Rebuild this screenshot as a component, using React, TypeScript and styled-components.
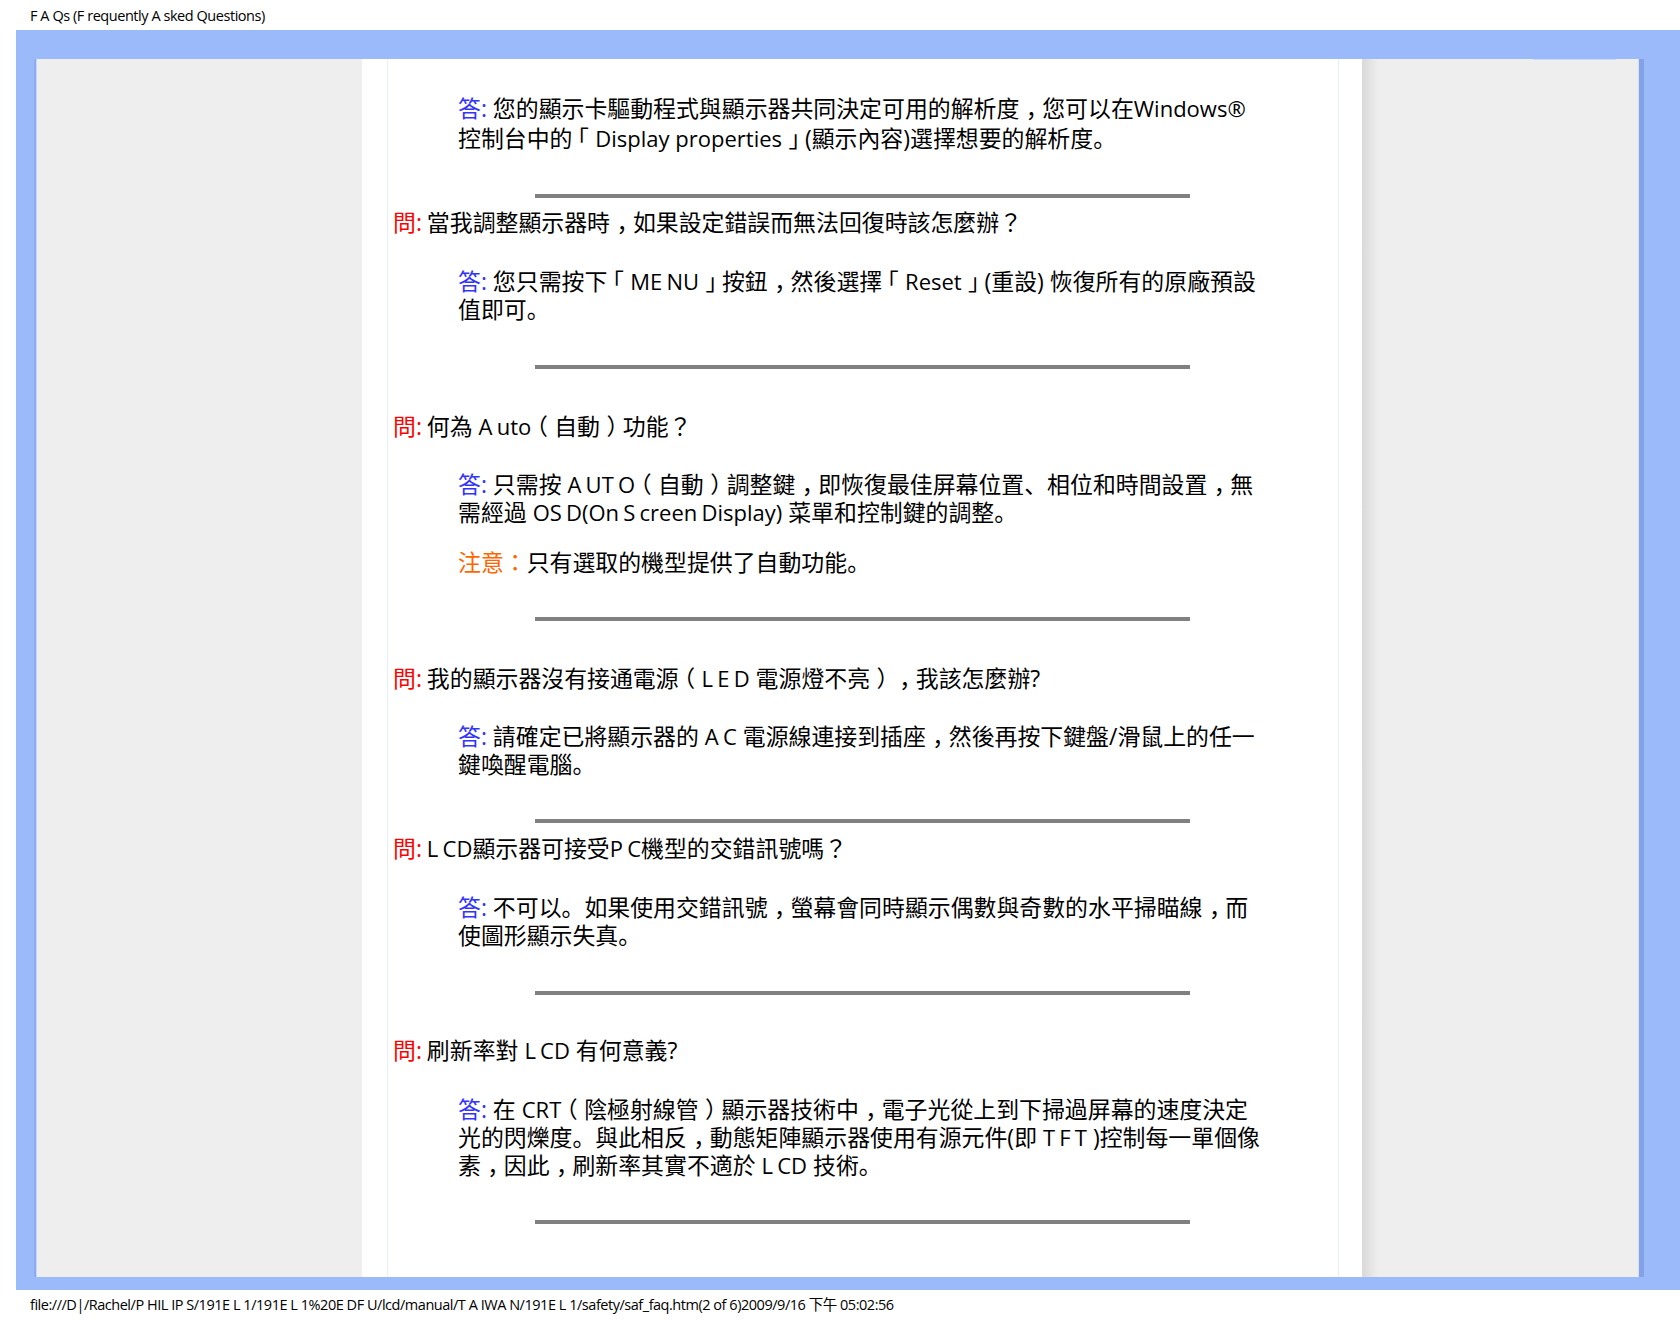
import { createGlobalStyle, styled } from "styled-components";

const GlobalStyle = createGlobalStyle`
  html, body {
    margin: 0;
    padding: 0;
    background: #ffffff;
  }
  body {
    font-family: "Open Sans", "Noto Sans CJK SC", sans-serif;
    color: #000000;
    text-spacing-trim: space-all;
    font-kerning: none;
  }
`;

const Page = styled.div`
  width: 1680px;
  height: 1320px;
  overflow: hidden;
  display: flex;
  flex-direction: column;
`;

const TopLine = styled.div`
  height: 30px;
  padding: 1px 0 0 30px;
  box-sizing: border-box;
  font-size: 14.5px;
  line-height: 30px;
  white-space: pre;
  letter-spacing: -0.45px;
`;

const Frame = styled.div`
  margin-left: 16px;
  height: 1260px;
  background: #9abaf9;
  padding: 29px 36px 13px 18px;
  box-sizing: border-box;
`;

const Inner = styled.div`
  height: 100%;
  display: flex;
  border-left: 2px solid #8fabf0;
  border-right: 5px solid #84a0e6;
`;

const SideLeft = styled.div`
  width: 326px;
  box-sizing: border-box;
  background: #eeeeee;
  border-left: 1px solid #c8d8fa;
`;

const SideRight = styled.div`
  flex: 1;
  background: linear-gradient(to right, #d9d9d9 0, #eeeeee 16px);
  border-right: 1px solid #d6e2f6;
  position: relative;
`;

const TopGlint = styled.div`
  position: absolute;
  top: 0;
  left: 171px;
  width: 83px;
  height: 1px;
  background: #c8d8f6;
`;

const Sheet = styled.div`
  width: 1000px;
  background: #ffffff;
  padding: 0 23px 0 25px;
  box-sizing: border-box;
`;

const Column = styled.div`
  height: 100%;
  border-left: 1px solid #e6eef8;
  border-right: 1px solid #e6eef8;
  padding: 35px 0 0 5px;
  box-sizing: border-box;
  font-size: 22.9px;
  line-height: 28px;
  white-space: pre;
  overflow: hidden;
`;

const Question = styled.div<{ $top: number }>`
  margin-top: ${(p) => p.$top}px;
`;

const Answer = styled.div<{ $top: number; $lh?: number }>`
  margin-top: ${(p) => p.$top}px;
  margin-left: 65px;
  line-height: ${(p) => p.$lh ?? 28}px;
`;

const Rule = styled.div<{ $top: number }>`
  margin-top: ${(p) => p.$top}px;
  margin-left: 142px;
  width: 655px;
  height: 4px;
  background: #808080;
`;

const Latin = styled.span<{ $gap?: number }>`
  font-size: 22px;
  line-height: 1;
  word-spacing: ${(p) => p.$gap ?? -1.5}px;
`;

// full-width punctuation sits mid-cell in the source: halve the glyph and pad it back to one em
const Open = styled.span`
  font-feature-settings: "halt";
  padding: 0 0.28em 0 0.22em;
`;

const Close = styled.span`
  font-feature-settings: "halt";
  padding: 0 0.22em 0 0.28em;
`;

const Ask = styled.span`
  font-family: "Open Sans", "Noto Sans CJK TC", sans-serif;
`;

const Q = styled.span`
  color: #ff0000;
  margin-right: -1px;
`;

const A = styled.span`
  color: #3333ff;
`;

const Note = styled.span`
  color: #ff6600;
  font-family: "Open Sans", "Noto Sans CJK TC", sans-serif;
`;

const BottomLine = styled.div`
  height: 30px;
  padding-left: 30px;
  font-size: 14.5px;
  line-height: 30px;
  white-space: pre;
  letter-spacing: -0.47px;
`;

export default function App() {
  return (
    <Page>
      <GlobalStyle />
      <TopLine>F A Qs (F requently A sked Questions)</TopLine>
      <Frame>
        <Inner>
          <SideLeft />
          <Sheet>
            <Column>
              <Answer $top={0} $lh={30}>
                <A>答:</A> 您的顯示卡驅動程式與顯示器共同決定可用的解析度<Close>，</Close>您可以在<Latin>Windows®</Latin>
                <br />
                控制台中的<Open>「</Open><Latin $gap={0}>Display properties</Latin><Close>」</Close>(顯示內容)選擇想要的解析度。
              </Answer>
              <Rule $top={40} />
              <Question $top={11}>
                <Q>問:</Q> 當我調整顯示器時<Close>，</Close>如果設定錯誤而無法回復時該怎麼辦<Ask>？</Ask>
              </Question>
              <Answer $top={31}>
                <A>答:</A> 您只需按下<Open>「</Open><Latin>ME NU</Latin><Close>」</Close>按鈕<Close>，</Close>然後選擇<Open>「</Open><Latin>Reset</Latin><Close>」</Close>(重設) 恢復所有的原廠預設
                <br />
                值即可。
              </Answer>
              <Rule $top={41} />
              <Question $top={44}>
                <Q>問:</Q> 何為 <Latin>A uto</Latin><Open>（</Open>自動<Close>）</Close>功能<Ask>？</Ask>
              </Question>
              <Answer $top={30}>
                <A>答:</A> 只需按 <Latin>A UT O</Latin><Open>（</Open>自動<Close>）</Close>調整鍵<Close>，</Close>即恢復最佳屏幕位置、相位和時間設置<Close>，</Close>無
                <br />
                需經過 <Latin>OS D(On S creen Display)</Latin> 菜單和控制鍵的調整。
              </Answer>
              <Answer $top={22}>
                <Note>注意：</Note>只有選取的機型提供了自動功能。
              </Answer>
              <Rule $top={40} />
              <Question $top={44}>
                <Q>問:</Q> 我的顯示器沒有接通電源<Open>（</Open><Latin>L E D</Latin> 電源燈不亮<Close>）</Close><Close>，</Close>我該怎麼辦?
              </Question>
              <Answer $top={30}>
                <A>答:</A> 請確定已將顯示器的 <Latin>A C</Latin> 電源線連接到插座<Close>，</Close>然後再按下鍵盤/滑鼠上的任一
                <br />
                鍵喚醒電腦。
              </Answer>
              <Rule $top={40} />
              <Question $top={12}>
                <Q>問:</Q> <Latin>L CD</Latin>顯示器可接受<Latin>P C</Latin>機型的交錯訊號嗎<Ask>？</Ask>
              </Question>
              <Answer $top={31}>
                <A>答:</A> 不可以。如果使用交錯訊號<Close>，</Close>螢幕會同時顯示偶數與奇數的水平掃瞄線<Close>，</Close>而
                <br />
                使圖形顯示失真。
              </Answer>
              <Rule $top={41} />
              <Question $top={42}>
                <Q>問:</Q> 刷新率對 <Latin>L CD</Latin> 有何意義?
              </Question>
              <Answer $top={31}>
                <A>答:</A> 在 <Latin>CRT</Latin><Open>（</Open>陰極射線管<Close>）</Close>顯示器技術中<Close>，</Close>電子光從上到下掃過屏幕的速度決定
                <br />
                光的閃爍度。與此相反<Close>，</Close>動態矩陣顯示器使用有源元件(即 <Latin>T F T</Latin> )控制每一單個像
                <br />
                素<Close>，</Close>因此<Close>，</Close>刷新率其實不適於 <Latin>L CD</Latin> 技術。
              </Answer>
              <Rule $top={40} />
            </Column>
          </Sheet>
          <SideRight>
            <TopGlint />
          </SideRight>
        </Inner>
      </Frame>
      <BottomLine>file:///D|/Rachel/P HIL IP S/191E L 1/191E L 1%20E DF U/lcd/manual/T A IWA N/191E L 1/safety/saf_faq.htm(2 of 6)2009/9/16 下午 05:02:56</BottomLine>
    </Page>
  );
}
